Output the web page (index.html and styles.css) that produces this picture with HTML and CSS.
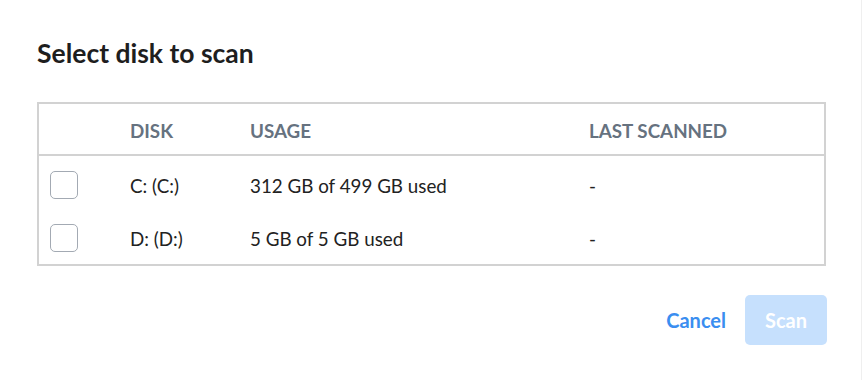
FILE: index.html
```html
<!DOCTYPE html>
<html>
<head>
<meta charset="utf-8">
<link rel="stylesheet" href="styles.css">
</head>
<body>
<div class="dialog">
  <h1 class="title">Select disk to scan</h1>
  <div class="table">
    <div class="row head">
      <div class="cell"></div>
      <div class="cell">DISK</div>
      <div class="cell">USAGE</div>
      <div class="cell">LAST SCANNED</div>
    </div>
    <div class="body">
      <div class="row">
        <div class="cell"><span class="check"></span></div>
        <div class="cell">C: (C:)</div>
        <div class="cell">312 GB of 499 GB used</div>
        <div class="cell">-</div>
      </div>
      <div class="row">
        <div class="cell"><span class="check"></span></div>
        <div class="cell">D: (D:)</div>
        <div class="cell">5 GB of 5 GB used</div>
        <div class="cell">-</div>
      </div>
    </div>
  </div>
  <div class="actions">
    <button class="btn link">Cancel</button>
    <button class="btn primary" disabled>Scan</button>
  </div>
</div>
</body>
</html>
```
FILE: styles.css
```css
* { box-sizing: border-box; }
html, body { margin: 0; padding: 0; background: #fff; }
body {
  font-family: Lato, "Open Sans", sans-serif;
  color: #222;
  width: 863px;
  height: 380px;
  overflow: hidden;
}
.dialog {
  width: 862px;
  height: 380px;
  border-right: 1px solid #efefef;
  padding: 35px 36px 0 37px;
}
.title {
  margin: 0;
  font-size: 26.5px;
  font-weight: 700;
  line-height: 36px;
  color: #1e1e1e;
}
.table {
  margin-top: 31px;
  width: 789px;
  border: 2px solid #d2d2d2;
}
.row {
  display: grid;
  grid-template-columns: 91px 120px 339px 1fr;
  align-items: center;
}
.head {
  height: 52px;
  padding-top: 3px;
  border-bottom: 2px solid #d2d2d2;
  color: #66727f;
  font-weight: 700;
  font-size: 18.8px;
}
.body { padding-top: 3px; padding-bottom: 1px; }
.body .row {
  height: 52px;
  font-size: 18.8px;
  color: #222;
}
.body .row + .row { padding-top: 2px; }
.cell:first-child { padding-left: 11px; }
.check {
  display: block;
  width: 28px;
  height: 28px;
  border: 1.5px solid #a3aab3;
  border-radius: 5px;
}
.actions {
  display: flex;
  justify-content: flex-end;
  align-items: center;
  gap: 19px;
  margin-top: 29px;
  width: 790px;
}
.btn {
  font-family: inherit;
  font-size: 20px;
  font-weight: 700;
  border: none;
  background: none;
  padding: 0;
}
.link { color: #3a8ef0; }
.primary {
  width: 82px;
  height: 50px;
  border-radius: 5px;
  background: #c6e0fd;
  color: #fff;
}
```
